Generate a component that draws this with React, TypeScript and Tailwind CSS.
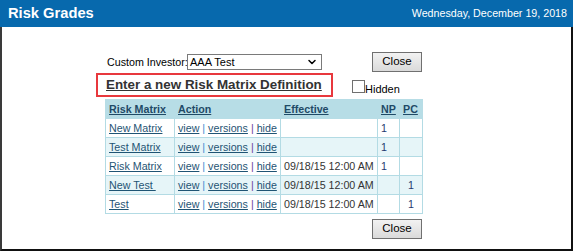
import { ChevronDown } from "lucide-react";

interface Row {
  name: string;
  effective: string;
  np: string;
  pc: string;
}

const rows: Row[] = [
  { name: "New Matrix", effective: "", np: "1", pc: "" },
  { name: "Test Matrix", effective: "", np: "1", pc: "" },
  { name: "Risk Matrix", effective: "09/18/15 12:00 AM", np: "1", pc: "" },
  { name: "New Test ", effective: "09/18/15 12:00 AM", np: "", pc: "1" },
  { name: "Test", effective: "09/18/15 12:00 AM", np: "", pc: "1" },
];

function CloseButton() {
  return (
    <button className="w-[50px] h-[20px] border border-[#707070] bg-gradient-to-b from-[#f2f2f2] to-[#dadada] text-[11.5px] text-black leading-none">
      Close
    </button>
  );
}

export default function App() {
  return (
    <div className="w-[573px] h-[251px] bg-white font-['Liberation_Sans',Arial,sans-serif] text-[10.7px] text-[#222]">
      <div className="h-[27px] bg-[#0769ad] flex items-center justify-between pl-[8px] pr-[6px]">
        <h1 className="text-[14.7px] font-bold text-white">Risk Grades</h1>
        <span className="text-[10.7px] text-white">Wednesday, December 19, 2018</span>
      </div>

      <div className="h-[224px] border-l-2 border-r-2 border-b-2 border-l-[#3a3a3a] border-r-[#111] border-b-[#111]">
        <div className="ml-[94px] w-[326px] pt-[25px] flex flex-col">
          <div className="flex items-center h-[20px]">
            <span className="pl-[11px] w-[91px] whitespace-nowrap text-[10.7px] text-black">Custom Investor:</span>
            <div className="w-[135px] h-[16px] border border-[#7a7a7a] flex items-center justify-between pl-[2px] pr-[3px] text-[11px] text-black">
              <span>AAA Test</span>
              <ChevronDown className="w-[12px] h-[12px]" strokeWidth={3} />
            </div>
            <div className="flex-1" />
            <CloseButton />
          </div>

          <div className="flex items-start mt-[1px]">
            <div className="w-[237px] h-[24px] border-2 border-[#e8383d] pl-[8px] flex items-center">
              <a className="text-[13.4px] font-bold underline text-[#333] leading-none">
                Enter a new Risk Matrix Definition
              </a>
            </div>
            <label className="ml-[19px] mt-[7px] flex items-end">
              <span className="w-[13px] h-[13px] border border-[#707070] bg-white" />
              <span className="text-[11px] text-black leading-none -mb-[2px]">Hidden</span>
            </label>
          </div>

          <table className="ml-[9px] mt-[2px] w-[317px] border-collapse text-[10.7px] table-fixed">
            <colgroup>
              <col className="w-[69px]" />
              <col className="w-[106px]" />
              <col className="w-[97px]" />
              <col className="w-[22px]" />
              <col className="w-[23px]" />
            </colgroup>
            <thead>
              <tr className="h-[19px] bg-[#b7dde6]">
                {["Risk Matrix", "Action", "Effective", "NP", "PC"].map((h) => (
                  <th
                    key={h}
                    className="border border-[#b7dde6] text-left font-bold underline text-[#1f4a66] px-[3px] py-0 whitespace-nowrap"
                  >
                    {h}
                  </th>
                ))}
              </tr>
            </thead>
            <tbody>
              {rows.map((r, i) => (
                <tr key={i} className={i % 2 === 1 ? "h-[19px] bg-[#e6f5f8]" : "h-[19px] bg-white"}>
                  <td className="border border-[#b3dbe4] px-[3px] whitespace-pre">
                    <a className="underline text-[#1f5474]">{r.name}</a>
                  </td>
                  <td className="border border-[#b3dbe4] px-[3px] whitespace-nowrap">
                    <a className="underline text-[#1f5474]">view</a>
                    <span className="text-[#3a8fd0]"> | </span>
                    <a className="underline text-[#1f5474]">versions</a>
                    <span className="text-[#6b3fa0]"> | </span>
                    <a className="underline text-[#1f5474]">hide</a>
                  </td>
                  <td className="border border-[#b3dbe4] px-[3px] whitespace-nowrap text-[#333]">{r.effective}</td>
                  <td className="border border-[#b3dbe4] px-[3px] text-[#1f3a6e]">{r.np}</td>
                  <td className="border border-[#b3dbe4] px-[3px] text-center text-[#1f3a6e]">{r.pc}</td>
                </tr>
              ))}
            </tbody>
          </table>

          <div className="flex justify-end mt-[5px]">
            <CloseButton />
          </div>
        </div>
      </div>
    </div>
  );
}
